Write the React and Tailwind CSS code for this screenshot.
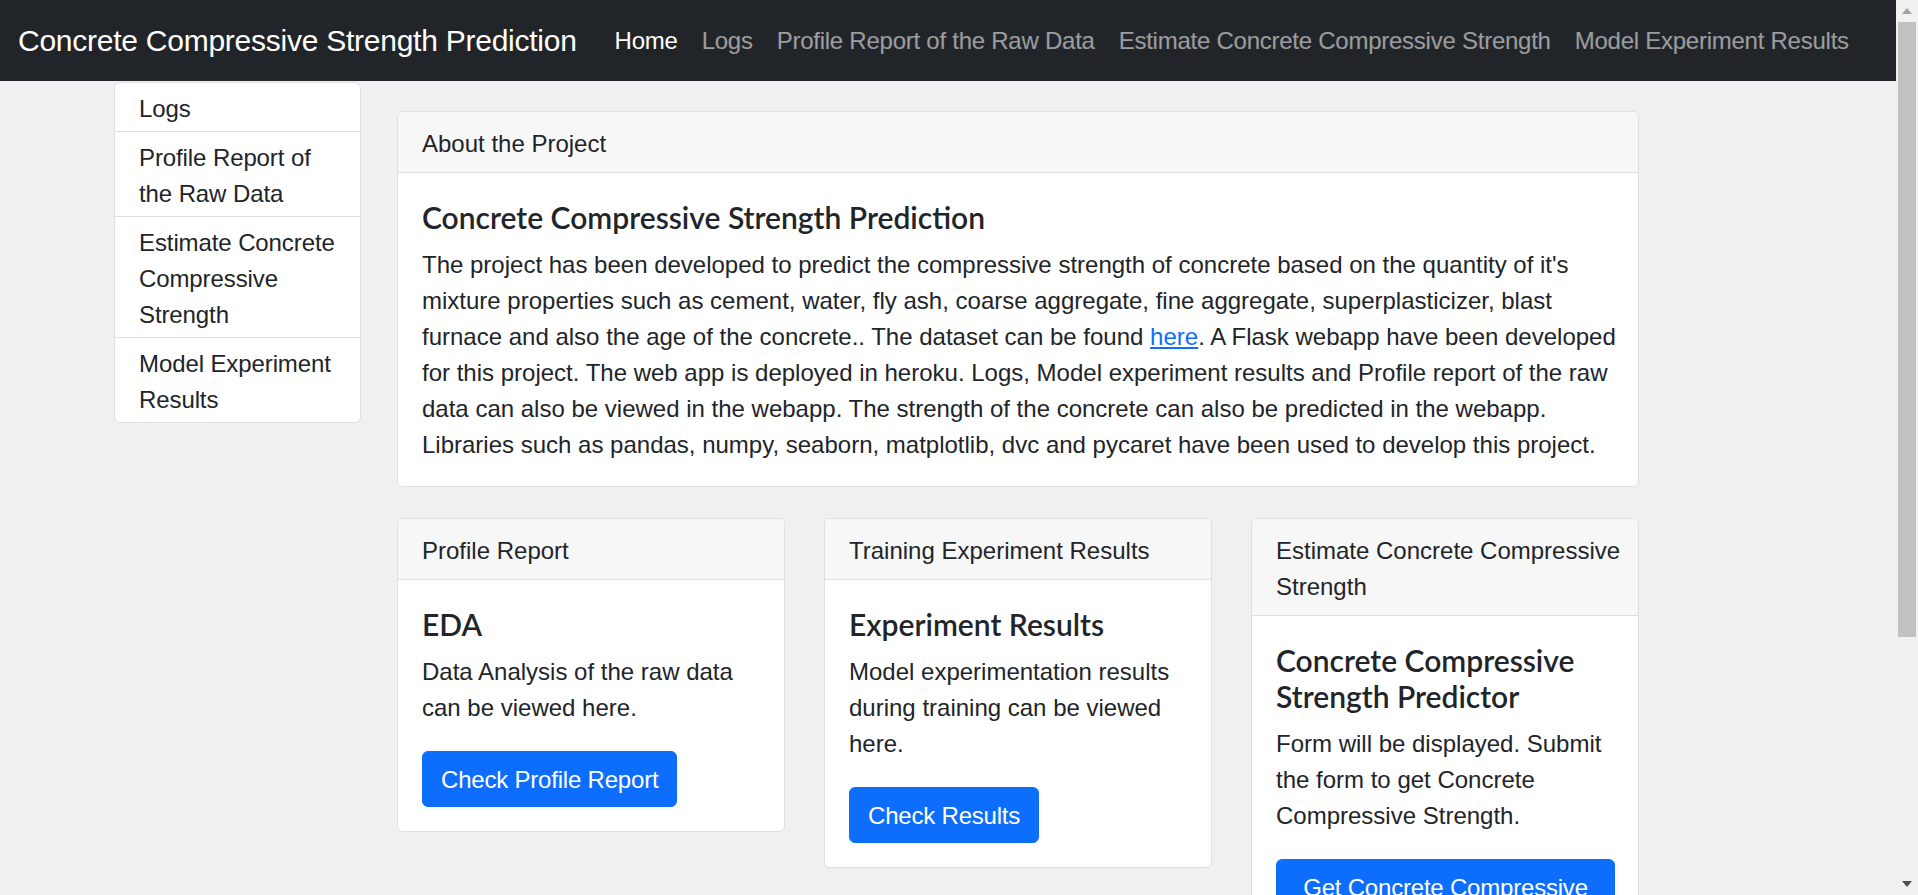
const navLinks = [
  "Logs",
  "Profile Report of the Raw Data",
  "Estimate Concrete Compressive Strength",
  "Model Experiment Results",
];

const sideLinks = [
  ["Logs"],
  ["Profile Report of", "the Raw Data"],
  ["Estimate Concrete", "Compressive", "Strength"],
  ["Model Experiment", "Results"],
];

function Lines({ lines }) {
  return lines.map((l, i) => (
    <span key={i} className="block whitespace-nowrap">
      {l}
    </span>
  ));
}

function Card({ header, title, text, button }) {
  return (
    <div className="bg-white border border-[#dfdfdf] rounded-[6px] overflow-hidden">
      <div className="bg-[#f7f7f7] border-b border-[#dfdfdf] px-[24px] pt-[14px] pb-[10px]">
        <Lines lines={header} />
      </div>
      <div className="px-[24px] pt-[26px] pb-[24px]">
        <h5 className="text-[30px] leading-[36px] font-semibold font-['Lato',sans-serif] mb-[12px]">
          <Lines lines={title} />
        </h5>
        <p className="mb-[25px]">
          <Lines lines={text} />
        </p>
        <button className="bg-[#0d6efd] text-white rounded-[6px] border border-[#0d6efd] px-[18px] pt-[10px] pb-[8px] leading-[36px] text-[24px] tracking-[-0.2px]">
          {button}
        </button>
      </div>
    </div>
  );
}

export default function App() {
  return (
    <div className="h-[895px] overflow-hidden flex bg-[#f0f0f0] text-[#212529] text-[24px] leading-[36px] font-['Liberation_Sans',Arial,sans-serif]">
      <div className="flex-1 min-w-0 flex flex-col">
        <nav className="h-[81px] shrink-0 bg-[#212529] flex items-center pl-[18px]">
          <span className="text-white text-[30px] leading-[45px] tracking-[-0.25px] mr-[26px] whitespace-nowrap">
            Concrete Compressive Strength Prediction
          </span>
          <a className="px-[12px] text-white tracking-[-0.25px] whitespace-nowrap">Home</a>
          {navLinks.map((l) => (
            <a key={l} className="px-[12px] text-white/55 tracking-[-0.25px] whitespace-nowrap">
              {l}
            </a>
          ))}
        </nav>

        <div className="flex items-start pl-[114px]">
          <aside className="w-[247px] shrink-0 mt-px bg-white border border-[#dfdfdf] rounded-[6px] divide-y divide-[#dfdfdf]">
            {sideLinks.map((lines, i) => (
              <div key={i} className="px-[24px] pt-[8px] pb-[4px] tracking-[-0.1px]">
                <Lines lines={lines} />
              </div>
            ))}
          </aside>

          <main className="ml-[36px] w-[1242px] shrink-0 pt-[30px]">
            <div className="bg-white border border-[#dfdfdf] rounded-[6px] overflow-hidden">
              <div className="bg-[#f7f7f7] border-b border-[#dfdfdf] px-[24px] pt-[14px] pb-[10px]">
                About the Project
              </div>
              <div className="px-[24px] pt-[26px] pb-[23px]">
                <h5 className="text-[30px] leading-[36px] font-semibold font-['Lato',sans-serif] mb-[12px]">
                  Concrete Compressive Strength Prediction
                </h5>
                <p>
                  <span className="block whitespace-nowrap">
                    The project has been developed to predict the compressive strength of concrete based on the quantity of it's
                  </span>
                  <span className="block whitespace-nowrap">
                    mixture properties such as cement, water, fly ash, coarse aggregate, fine aggregate, superplasticizer, blast
                  </span>
                  <span className="block whitespace-nowrap">
                    furnace and also the age of the concrete.. The dataset can be found{" "}
                    <a className="text-[#0d6efd] underline">here</a>. A Flask webapp have been developed
                  </span>
                  <span className="block whitespace-nowrap">
                    for this project. The web app is deployed in heroku. Logs, Model experiment results and Profile report of the raw
                  </span>
                  <span className="block whitespace-nowrap">
                    data can also be viewed in the webapp. The strength of the concrete can also be predicted in the webapp.
                  </span>
                  <span className="block whitespace-nowrap">
                    Libraries such as pandas, numpy, seaborn, matplotlib, dvc and pycaret have been used to develop this project.
                  </span>
                </p>
              </div>
            </div>

            <div className="grid grid-cols-3 gap-[39px] items-start mt-[31px]">
              <Card
                header={["Profile Report"]}
                title={["EDA"]}
                text={["Data Analysis of the raw data", "can be viewed here."]}
                button="Check Profile Report"
              />
              <Card
                header={["Training Experiment Results"]}
                title={["Experiment Results"]}
                text={[
                  "Model experimentation results",
                  "during training can be viewed",
                  "here.",
                ]}
                button="Check Results"
              />
              <Card
                header={["Estimate Concrete Compressive", "Strength"]}
                title={["Concrete Compressive", "Strength Predictor"]}
                text={[
                  "Form will be displayed. Submit",
                  "the form to get Concrete",
                  "Compressive Strength.",
                ]}
                button={
                  <span className="block w-[301px]">
                    Get Concrete Compressive Strength
                  </span>
                }
              />
            </div>
          </main>
        </div>
      </div>

      <div className="w-[22px] shrink-0 bg-[#f1f1f1] flex flex-col items-center">
        <div className="h-[22px] flex items-center justify-center">
          <svg width="10" height="6" viewBox="0 0 10 6">
            <path d="M5 0 L10 6 L0 6 Z" fill="#a3a3a3" />
          </svg>
        </div>
        <div className="w-[18px] h-[615px] bg-[#c1c1c1]" />
        <div className="flex-1" />
        <div className="h-[22px] flex items-center justify-center">
          <svg width="10" height="6" viewBox="0 0 10 6">
            <path d="M0 0 L10 0 L5 6 Z" fill="#505050" />
          </svg>
        </div>
      </div>
    </div>
  );
}
